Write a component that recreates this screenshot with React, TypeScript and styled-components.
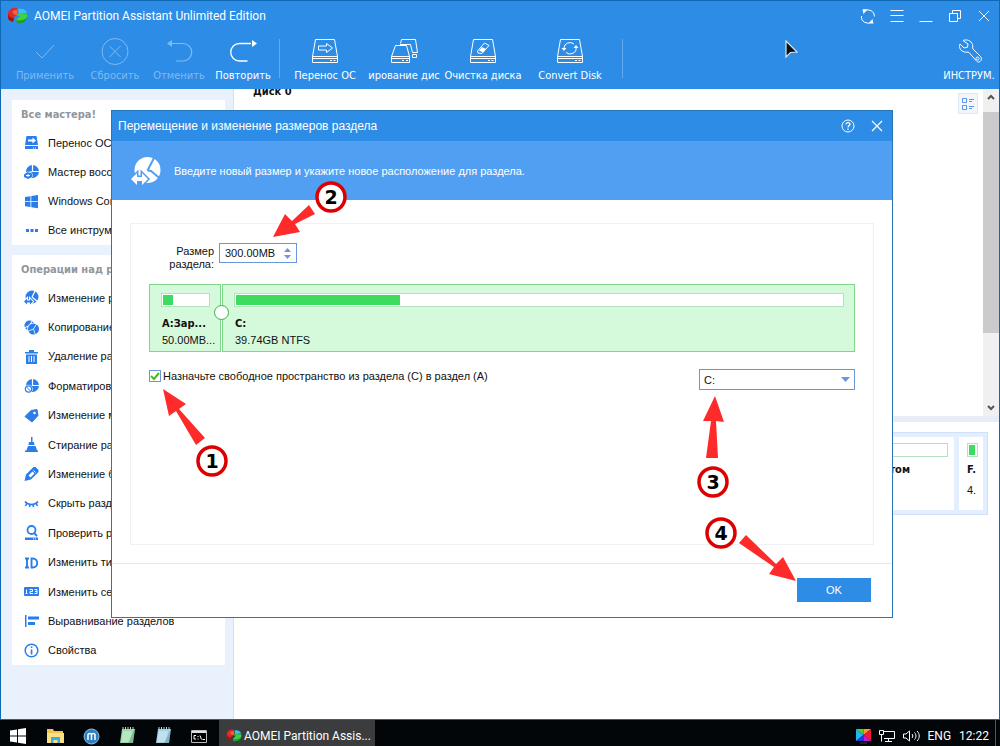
import React, { useState } from "react";
import styled, { createGlobalStyle, css } from "styled-components";

const ui = `"Liberation Sans", Arial, sans-serif`;
const uiWide = `"DejaVu Sans Condensed", "DejaVu Sans", sans-serif`;
const shell = `Roboto, "Noto Sans", sans-serif`;
const blue = "#2d8ce6";
const bannerBlue = "#519ff2";
const iconBlue = "#2b7de9";

const GlobalStyle = createGlobalStyle`
  *, *::before, *::after { box-sizing: border-box; }
  body { margin: 0; background: #fff; font-family: ${ui}; font-size: 11px; color: #111; }
  strong { font-family: ${uiWide}; }
  button, input, select { font: inherit; color: inherit; }
  button { border: 0; padding: 0; background: none; }
  svg { display: block; flex: none; }
`;

const Desktop = styled.div`
  display: flex;
  flex-direction: column;
  min-height: 100vh;
`;

const AppWindow = styled.div`
  position: relative;
  flex: 1;
  display: flex;
  flex-direction: column;
  border: 1px solid #0f68b4;
  background: #fff;
`;

const Header = styled.header`
  background: ${blue};
  color: #fff;
`;

const TitleBar = styled.div`
  display: flex;
  align-items: center;
  height: 32px;
  padding: 0 1px 2px 6px;
  gap: 6px;
`;

const AppTitle = styled.h1`
  flex: 1;
  margin: 0;
  font-family: ${shell};
  font-size: 12px;
  font-weight: 400;
  white-space: nowrap;
`;

const WindowButtons = styled.div`
  display: flex;
`;

const WindowButton = styled.button`
  display: flex;
  align-items: center;
  justify-content: center;
  width: 29px;
  height: 28px;
`;

const Toolbar = styled.div`
  display: flex;
  height: 56px;
  padding-left: 6px;
  font-family: ${uiWide};
`;

const ToolButton = styled.button<{ $width: number }>`
  display: flex;
  flex-direction: column;
  align-items: center;
  gap: 3px;
  width: ${(p) => p.$width}px;
  padding-top: 5px;
  overflow: hidden;
  white-space: nowrap;
  color: #fff;
  line-height: 14px;
  &:disabled { color: #7fbaf3; }
`;

const ToolSeparator = styled.span`
  width: 1px;
  height: 39px;
  margin: 6px 6px 0 4px;
  background: #62aaf0;
`;

const Spacer = styled.span`
  flex: 1;
`;

const Content = styled.div`
  flex: 1;
  display: grid;
  grid-template-columns: 233px 1fr;
`;

const Sidebar = styled.aside`
  display: flex;
  flex-direction: column;
  gap: 10px;
  padding: 11px 8px 0 11px;
  background: #e9f1fd;
  border-right: 1px solid #d3e0f0;
`;

const Group = styled.section`
  background: #fff;
`;

const GroupTitle = styled.h2`
  margin: 0;
  padding-left: 9px;
  height: 28px;
  line-height: 30px;
  font-family: ${uiWide};
  font-size: 11px;
  font-weight: 700;
  color: #8f969e;
  white-space: nowrap;
`;

const GroupList = styled.div<{ $height: number }>`
  display: grid;
  grid-auto-rows: 1fr;
  height: ${(p) => p.$height}px;
`;

const GroupItem = styled.button`
  display: flex;
  align-items: center;
  gap: 9px;
  padding: 0 0 0 12px;
  text-align: left;
  white-space: nowrap;
  overflow: hidden;
`;

const Main = styled.main`
  display: flex;
  flex-direction: column;
  min-width: 0;
`;

const DiskList = styled.div`
  display: flex;
  flex: 0 0 327px;
  overflow: hidden;
`;

const DiskName = styled.h2`
  flex: 1;
  margin: -5px 0 0 19px;
  font-family: ${uiWide};
  font-size: 11px;
  line-height: 16px;
  font-weight: 700;
`;

const ViewButton = styled.button`
  display: flex;
  align-items: center;
  justify-content: center;
  width: 20px;
  height: 21px;
  margin: 4px 5px 0 0;
  border: 1px solid #dbe7f5;
  background: #f1f6fc;
`;

const Scrollbar = styled.div`
  display: flex;
  flex-direction: column;
  align-items: stretch;
  width: 16px;
  background: #f0f0f0;
`;

const ScrollArrow = styled.button`
  display: flex;
  align-items: center;
  justify-content: center;
  height: 16px;
`;

const ScrollThumb = styled.div`
  height: 221px;
  margin: 7px 0 auto;
  background: #cbcbcb;
`;

const Splitter = styled.div`
  height: 6px;
  background: #e6edf6;
`;

const DiskMap = styled.section`
  display: flex;
  gap: 5px;
  height: 83px;
  margin: 10px 11px 0;
  padding: 4px;
  border: 1px solid #cfe0f8;
  background: #e3eefe;
`;

const DiskCell = styled.div<{ $small?: boolean }>`
  display: flex;
  flex-direction: column;
  overflow: hidden;
  background: #fff;
  line-height: 21px;
  ${(p) =>
    p.$small
      ? css`
          width: 24px;
          padding: 6px 5px 0 8px;
        `
      : css`
          flex: 1;
          padding: 6px 6px 0;
        `}
`;

const DiskLabel = styled.strong<{ $end?: boolean }>`
  margin-top: 2px;
  ${(p) => p.$end && "padding-right: 38px; text-align: right;"}
`;

const Usage = styled.div`
  height: 14px;
  padding: 1px;
  border: 1px solid #b5e3bf;
  background: #fff;
  flex: none;
`;

const UsageFill = styled.div`
  height: 100%;
  background: #3bdc60;
`;

/* ---------- dialog ---------- */

const Dialog = styled.div`
  position: absolute;
  top: 109px;
  left: 110px;
  right: 106px;
  border: 1px solid #2676b8;
  background: #fff;
`;

const DialogTitle = styled.div`
  display: flex;
  align-items: center;
  height: 30px;
  padding: 0 1px 1px 6px;
  background: ${blue};
  color: #fff;
`;

const DialogHeading = styled.h2`
  flex: 1;
  margin: 0;
  font-size: 12px;
  font-weight: 400;
`;

const Banner = styled.div`
  display: flex;
  align-items: center;
  gap: 12px;
  height: 59px;
  padding-left: 18px;
  background: ${bannerBlue};
  color: #fff;
`;

const BannerText = styled.p`
  margin: 0;
`;

const Panel = styled.div`
  height: 322px;
  margin: 23px 18px 18px;
  padding: 19px 18px 0;
  border: 1px solid #eff1f6;
`;

const SizeRow = styled.div`
  display: flex;
  gap: 5px;
`;

const SizeLabel = styled.label`
  width: 65px;
  padding-top: 2px;
  line-height: 13px;
  text-align: right;
`;

const SpinBox = styled.div`
  display: flex;
  width: 78px;
  height: 20px;
  border: 1px solid #6a97da;
  background: #fff;
`;

const SizeInput = styled.input`
  flex: 1;
  min-width: 0;
  padding: 0 0 1px 5px;
  border: 0;
  outline: 0;
  background: none;
`;

const Spinners = styled.div`
  display: flex;
  flex-direction: column;
  justify-content: center;
  gap: 3px;
  width: 18px;
`;

const SpinButton = styled.button`
  display: flex;
  justify-content: center;
`;

const PartitionBar = styled.div`
  position: relative;
  display: flex;
  gap: 1px;
  height: 68px;
  margin-top: 13px;
`;

const Partition = styled.div<{ $width?: number }>`
  display: flex;
  flex-direction: column;
  ${(p) => (p.$width ? `width: ${p.$width}px;` : "flex: 1;")}
  min-width: 0;
  padding: 8px 10px 0 11px;
  border: 1px solid #7fd58a;
  background: #d5fadb;
  line-height: 17px;
  white-space: nowrap;
`;

const PartitionName = styled.strong`
  margin-top: 8px;
  padding-left: 1px;
`;

const PartitionSize = styled.span`
  padding-left: 1px;
`;

const DragHandle = styled.button`
  position: absolute;
  left: 65px;
  top: 21px;
  width: 15px;
  height: 15px;
  border: 1px solid #3cae4c;
  border-radius: 50%;
  background: #fff;
`;

const OptionRow = styled.div`
  display: flex;
  justify-content: space-between;
  align-items: flex-start;
  margin-top: 17px;
`;

const CheckLabel = styled.label`
  display: flex;
  align-items: center;
  gap: 2px;
  height: 14px;
`;

const CheckBox = styled.input`
  appearance: none;
  width: 12px;
  height: 12px;
  margin: 0;
  border: 1px solid #6a97da;
  background: #fff;
`;

const CheckHolder = styled.span`
  position: relative;
  display: flex;
`;

const CheckMark = styled.svg`
  position: absolute;
  left: 1px;
  top: 1px;
  pointer-events: none;
`;

const SelectBox = styled.div`
  position: relative;
  width: 156px;
`;

const DriveSelect = styled.select`
  appearance: none;
  display: block;
  width: 100%;
  height: 21px;
  padding: 0 0 0 4px;
  border: 1px solid #6a97da;
  border-radius: 0;
  background: #fff;
`;

const SelectArrow = styled.svg`
  position: absolute;
  right: 5px;
  top: 8px;
  pointer-events: none;
`;

const DialogFooter = styled.footer`
  display: flex;
  justify-content: flex-end;
  padding: 14px 21px 15px;
  border-top: 1px solid #e4e8f0;
`;

const OkButton = styled.button`
  width: 74px;
  height: 24px;
  background: ${blue};
  color: #fff;
`;

const CalloutSvg = styled.svg<{ $left?: number; $right?: number; $top: number }>`
  position: absolute;
  top: ${(p) => p.$top}px;
  ${(p) => (p.$left !== undefined ? `left: ${p.$left}px;` : `right: ${p.$right}px;`)}
  pointer-events: none;
`;

const Pointer = styled.svg`
  position: absolute;
  left: 783px;
  top: 38px;
`;

/* ---------- taskbar ---------- */

const Taskbar = styled.nav`
  display: flex;
  height: 26px;
  overflow: hidden;
  background: #030608;
  color: #fff;
  font-family: ${shell};
  font-size: 12px;
`;

const TaskButton = styled.button`
  display: flex;
  align-items: center;
  justify-content: center;
  width: 36px;
  height: 32px;
  &:first-child { padding-right: 1px; }
  &:nth-child(2) { margin-left: 1px; }
`;

const ActiveTask = styled.button`
  display: flex;
  align-items: center;
  gap: 2px;
  width: 156px;
  height: 32px;
  margin-left: 2px;
  padding-left: 7px;
  background: #3a3c3e;
  white-space: nowrap;
`;

const Tray = styled.div`
  display: flex;
  align-items: center;
  height: 32px;
  margin-left: auto;
  padding-right: 6px;
  gap: 8px;
`;

const ShowDesktop = styled.span`
  width: 5px;
  height: 26px;
  border-left: 1px solid #55585a;
`;

/* ---------- icons ---------- */

const Logo = ({ w = 21 }: { w?: number }) => (
  <svg width={w} height={(w * 18) / 21} viewBox="0 0 21 18">
    <path d="M10 1C5 0 1 3 1 7v4c1 2 3 3 5 4l1-5 4-3z" fill="#e02a22" />
    <path d="M1 7c1 3 3 4 6 4l-1 4c-3-1-5-2-5-5z" fill="#9f1512" />
    <path d="M11 2c5-1 8 1 9 4l-8 1z" fill="#3cc0ee" />
    <path d="M20 7c1 5-2 9-10 9l-1-3 4-4-4-1 2-1z" fill="#3ed344" />
    <path d="M20 10c0 4-4 7-10 6l-1-3c5 1 9 0 11-3z" fill="#1c9d2c" />
    <path d="M5 5c2-2 3-2 5-2l1 4-3 1z" fill="#f4604c" />
  </svg>
);

const Line = ({ children, w, h = w, sw = 1 }: { children: React.ReactNode; w: number; h?: number; sw?: number }) => (
  <svg width={w} height={h} viewBox={`0 0 ${w} ${h}`} fill="none" stroke="currentColor" strokeWidth={sw}>
    {children}
  </svg>
);

const DriveBase = () => (
  <path d="M4.500 1.500h19l3 17v6h-25v-6zM1.500 18.500h25M1.500 20.500h25M19 22.500h2M22.500 22.500h2" />
);

const toolIcons: Record<string, React.ReactNode> = {
  apply: <Line w={28}><path d="M5 14l6 6L23 7" /></Line>,
  discard: <Line w={28}><circle cx="14" cy="13.500" r="13" /><path d="M8.500 8l11 11M19.500 8l-11 11" /></Line>,
  undo: <Line w={28}><path d="M6 5.500h12a8.500 8.500 0 0 1 0 17.500h-7" strokeWidth="1.200" /><path d="M2 5.500l5-3.500v7z" fill="currentColor" stroke="none" /></Line>,
  redo: <Line w={28}><path d="M22 5.500H10.500a8.500 8.500 0 0 0 0 17.500h8" strokeWidth="1.300" /><path d="M28 5.500l-5-3.500v7z" fill="currentColor" stroke="none" /></Line>,
  migrate: <Line w={28}><DriveBase /><path d="M7.500 8h8V5.500l6 4.500-6 4.500V12h-8z" /></Line>,
  clone: <Line w={28}><path d="M5.500 7.500h11l3 11v6h-18v-6zM1.500 18.500h18M1.500 20.500h18M12 22.500h2M16 22.500h2M10.500 5.500l1-4h14l2 13h-5l-2-8H10M22.500 16.500h4v3h-4z" /></Line>,
  wipe: <Line w={28}><DriveBase /><path d="M8.500 13l7-8 4.500 2.500-7 8-4-.5z" /><path d="M10 12.500l3-3.500 4 2-3 3.500z" fill="currentColor" stroke="none" /></Line>,
  convert: <Line w={28}><DriveBase /><path d="M8 10a6 5.500 0 0 1 10-4M20 9.500a6 5.500 0 0 1-10 5" /><path d="M5.500 10h5L8 13zM17.500 10h5L20 7z" fill="currentColor" stroke="none" /></Line>,
  tools: (
    <Line w={28}>
      <path d="M8 2.500c4-1.500 8 0 9.500 4 .5 2-.2 3.300.5 4.500l7.500 7.500c2 2 .5 5.500-2 5.500-1.500 0-2-1-2.500-1.500L14 14.500c-1.200-.8-2.500 0-4.500-.5C5.500 13 3.500 9.500 5 6l4 4 3.500-.8.5-3.200z" />
      <circle cx="22.500" cy="20.500" r="1.500" />
    </Line>
  ),
};

const sideIcons: Record<string, React.ReactNode> = {
  drive: <><path d="M2.500 1h10L14 10H1z" /><path d="M1 11h13v3H1z" /><path d="M4 4.500h4.500v-2L12 5.500 8.500 8.500v-2H4z" fill="#fff" /><path d="M9 13h1M11 13h1" stroke="#fff" /></>,
  recover: <><circle cx="8.500" cy="7.500" r="6.500" /><path d="M8.500 1v6.500H15M8.500 7.500L2 9" stroke="#fff" strokeWidth="1.200" fill="none" /><path d="M0 10.500L3.500 8 8 9.500V13l-4 2-4-2z" stroke="#fff" paintOrder="stroke" /><path d="M2 11.500h4M4 10v3" stroke="#fff" /></>,
  windows: <path d="M1 3l5.500-.8v5H1zM7.300 2L14 1v6.200H7.300zM1 8h5.500v5L1 12.200zM7.300 8H14v6.200L7.300 13.200z" />,
  dots: <path d="M2 6h3v3H2zM6.500 6h3v3h-3zM11 6h3v3h-3z" />,
  resize: <><circle cx="8" cy="7" r="6.500" /><path d="M8 7l3-6M8 7l6 5" stroke="#fff" strokeWidth="1.200" /><path d="M0 11.500L3 8.500v2h3v-2l3 3-3 3v-2H3v2z" stroke="#fff" strokeWidth="2" paintOrder="stroke" /></>,
  copy: <><circle cx="5.500" cy="5.500" r="5" /><path d="M5.500 5.500L8 1M5.500 5.500L0 8" stroke="#fff" /><circle cx="9.500" cy="9" r="5.500" stroke="#fff" strokeWidth="1.500" paintOrder="stroke" /><path d="M9.500 9l3-5M9.500 9l-5 2M9.500 9l2 6" stroke="#fff" strokeWidth=".8" /></>,
  trash: <><path d="M1 3h13v1.500H1zM5 1h5v2H5zM2 5.500h11V15H2z" /><path d="M5 7v6M7.500 7v6M10 7v6" stroke="#fff" /></>,
  format: <><circle cx="8.500" cy="7.500" r="6.500" /><path d="M8.500 1v6.500H15" stroke="#fff" strokeWidth="1.200" fill="none" /><circle cx="4.500" cy="11" r="4.300" fill="#fff" /><circle cx="4.500" cy="11" r="3.200" fill="#fff" stroke={iconBlue} strokeWidth="1.200" /><path d="M2.500 9l4 4" stroke={iconBlue} /></>,
  tag: <><path d="M7 2.500L13 1.500l1 6L8 14 1 8.500z" strokeLinejoin="round" stroke={iconBlue} /><circle cx="10.500" cy="5" r="1.300" fill="#fff" /></>,
  broom: <path d="M7 0h1.500v5H10l.5 3h-6L5 5h2zM4 9h7.500l2 5.500H2zM1 13.500h13V15H1z" />,
  pencil: <><path d="M.5 15L2 8.500 9.500 1h2L14.500 4v2L7 13.500z" /><path d="M4.500 9.500l4-4 2 2-4 4z" fill="#fff" /><path d="M9.500 4.500l2 2" stroke="#fff" /></>,
  eye: <path d="M1 5.500c3 4 10 4 13 0M3 7l-1.500 3M6 8.500L5.500 11M9 8.500l.5 2.500M12 7l1.500 3" fill="none" stroke={iconBlue} strokeWidth="1.600" />,
  check: <><circle cx="7.500" cy="5" r="4" fill="none" stroke={iconBlue} strokeWidth="1.800" /><path d="M10 8l3 3" stroke={iconBlue} strokeWidth="1.800" /><path d="M1 12.500h13V15H1z" /><path d="M9 13.800h1M11 13.800h1" stroke="#fff" /></>,
  id: <path d="M1 3.500h4M1 12.500h4M3 3.500v9M7.500 3.500v9h1.200c6 0 6-9 0-9z" fill="none" stroke={iconBlue} strokeWidth="1.900" />,
  serial: <><rect x="0" y="3" width="15" height="9" rx="1" /><path d="M2.500 5.500v4M1.500 9.500h2M5.500 5.500h3v2h-2.500v2h3M10.500 5.500h2.500v4h-2.500M11 7.500h2" fill="none" stroke="#fff" /></>,
  align: <path d="M1 2h1.500v12H1zM4 3.500h11v3H4zM4 9h7v3H4z" />,
  info: <><circle cx="7.500" cy="7.500" r="6.300" fill="none" stroke={iconBlue} strokeWidth="1.500" /><path d="M6.700 6.500h1.700v5H6.700zM6.700 3.500h1.700V5H6.700z" /></>,
};

const wizards: [string, string][] = [
  ["drive", "Перенос ОС на SSD"],
  ["recover", "Мастер восстановления"],
  ["windows", "Windows Command"],
  ["dots", "Все инструменты"],
];

const operations: [string, string][] = [
  ["resize", "Изменение размера"],
  ["copy", "Копирование раздела"],
  ["trash", "Удаление раздела"],
  ["format", "Форматирование"],
  ["tag", "Изменение метки"],
  ["broom", "Стирание раздела"],
  ["pencil", "Изменение буквы"],
  ["eye", "Скрыть раздел"],
  ["check", "Проверить раздел"],
  ["id", "Изменить тип"],
  ["serial", "Изменить серийный"],
  ["align", "Выравнивание разделов"],
  ["info", "Свойства"],
];

const SideGroup = ({ title, items, height }: { title: string; items: [string, string][]; height: number }) => (
  <Group>
    <GroupTitle>{title}</GroupTitle>
    <GroupList $height={height}>
      {items.map(([icon, label]) => (
        <GroupItem key={label}>
          <svg width="15" height="15" viewBox="0 0 15 15" fill={iconBlue}>{sideIcons[icon]}</svg>
          {label}
        </GroupItem>
      ))}
    </GroupList>
  </Group>
);

const Tool = ({ icon, label, width, disabled }: { icon: string; label: string; width: number; disabled?: boolean }) => (
  <ToolButton $width={width} disabled={disabled}>
    {toolIcons[icon]}
    {label}
  </ToolButton>
);

type CalloutProps = {
  n: number;
  box: [number, number, number, number];
  centre: [number, number];
  arrow: string;
  left?: number;
  right?: number;
};

const Callout = ({ n, box, centre, arrow, left, right }: CalloutProps) => (
  <CalloutSvg $top={box[1]} $left={left} $right={right} width={box[2]} height={box[3]} viewBox={box.join(" ")}>
    <polygon points={arrow} fill="#ff2a2a" />
    <circle cx={centre[0]} cy={centre[1]} r="14" fill="#fff" stroke="#dd0000" strokeWidth="3.500" />
    <text
      x={centre[0]}
      y={centre[1] + 7}
      textAnchor="middle"
      fontFamily='"DejaVu Sans", sans-serif'
      fontWeight="700"
      fontSize="19"
      fill="#000"
    >
      {n}
    </text>
  </CalloutSvg>
);

const Notepad = ({ tone }: { tone: string }) => (
  <svg width="17" height="18" viewBox="0 0 17 18">
    <path d="M3 2h13l-2 14H1z" fill={tone} />
    <path d="M4 4h9l-2 11H2z" fill="#fff" opacity=".35" />
    <path d="M16 2l-2 14H9z" fill="#3b6f74" opacity=".3" />
    <path d="M4 0v3M6.500 0v3M9 0v3M11.500 0v3M14 0v3" stroke="#c9d2d4" />
  </svg>
);

export default function App() {
  const [size, setSize] = useState("300.00MB");
  const [assign, setAssign] = useState(true);

  return (
    <Desktop>
      <GlobalStyle />
      <AppWindow>
        <Header>
          <TitleBar>
            <Logo />
            <AppTitle>AOMEI Partition Assistant Unlimited Edition</AppTitle>
            <WindowButtons>
              <WindowButton aria-label="Обновить">
                <Line w={16}>
                  <path d="M4 3.500A6.300 6.300 0 0 1 14.500 8.500M1.500 8A6.300 6.300 0 0 0 12 13.500" />
                  <path d="M2.500 1.200h5L3.500 6zM13.500 15.500h-5l4-4.500z" fill="currentColor" stroke="none" />
                </Line>
              </WindowButton>
              <WindowButton aria-label="Меню"><Line w={14}><path d="M.5 1.500h13M.5 6.500h13M.5 12.500h13" /></Line></WindowButton>
              <WindowButton aria-label="Свернуть"><Line w={14}><path d="M.5 12.500h13" /></Line></WindowButton>
              <WindowButton aria-label="Восстановить"><Line w={14}><path d="M1.500 4.500h8v8h-8zM4.500 4V1.500h8v8H10" /></Line></WindowButton>
              <WindowButton aria-label="Закрыть"><Line w={14}><path d="M2 2l10 10M12 2L2 12" /></Line></WindowButton>
            </WindowButtons>
          </TitleBar>
          <Toolbar>
            <Tool icon="apply" label="Применить" width={76} disabled />
            <Tool icon="discard" label="Сбросить" width={64} disabled />
            <Tool icon="undo" label="Отменить" width={64} disabled />
            <Tool icon="redo" label="Повторить" width={64} />
            <ToolSeparator />
            <Tool icon="migrate" label="Перенос ОС" width={78} />
            <Tool icon="clone" label="ирование дис" width={80} />
            <Tool icon="wipe" label="Очистка диска" width={78} />
            <Tool icon="convert" label="Convert Disk" width={96} />
            <ToolSeparator />
            <Spacer />
            <Tool icon="tools" label="ИНСТРУМ." width={60} />
          </Toolbar>
        </Header>

        <Content>
          <Sidebar>
            <SideGroup title="Все мастера!" items={wizards} height={117} />
            <SideGroup title="Операции над разделами" items={operations} height={382} />
          </Sidebar>
          <Main>
            <DiskList>
              <DiskName>Диск 0</DiskName>
              <ViewButton aria-label="Вид">
                <svg width="14" height="14" viewBox="0 0 14 14" fill="none" stroke="#5b94ec">
                  <path d="M1.500 1.500h4v4h-4zM1.500 8.500h4v4h-4zM8 2.500h5M8 4.500h3M8 9.500h5M8 11.500h3" />
                </svg>
              </ViewButton>
              <Scrollbar>
                <ScrollArrow aria-label="Вверх"><Line w={8} sw={2}><path d="M1 6l3-3 3 3" stroke="#555" /></Line></ScrollArrow>
                <ScrollThumb />
                <ScrollArrow aria-label="Вниз"><Line w={8} sw={2}><path d="M1 2l3 3 3-3" stroke="#555" /></Line></ScrollArrow>
              </Scrollbar>
            </DiskList>
            <Splitter />
            <DiskMap>
              <DiskCell>
                <Usage />
                <DiskLabel $end>том</DiskLabel>
              </DiskCell>
              <DiskCell $small>
                <Usage><UsageFill style={{ width: "80%" }} /></Usage>
                <DiskLabel>F.</DiskLabel>
                <span>4.</span>
              </DiskCell>
            </DiskMap>
          </Main>
        </Content>

        <Dialog role="dialog" aria-labelledby="dialog-title">
          <DialogTitle>
            <DialogHeading id="dialog-title">Перемещение и изменение размеров раздела</DialogHeading>
            <WindowButton aria-label="Справка">
              <Line w={14}><circle cx="7" cy="7" r="6" /><path d="M5 5.500C5 3 9 3 9 5.300 9 6.700 7 6.500 7 8.500M7 9.500V11" strokeWidth="1.200" /></Line>
            </WindowButton>
            <WindowButton aria-label="Закрыть"><Line w={14}><path d="M2 2l10 10M12 2L2 12" strokeWidth="1.200" /></Line></WindowButton>
          </DialogTitle>
          <Banner>
            <svg width="32" height="30" viewBox="0 0 32 30">
              <circle cx="17.500" cy="14" r="13" fill="#fff" />
              <path d="M17.500 14.500L24.500 1M17.500 14.500L21 15l9 7.500" fill="none" stroke={bannerBlue} strokeWidth="2" />
              <path d="M1 23l6-6v4h5v-4l6 6-6 6v-4H7v4z" fill="#fff" stroke={bannerBlue} strokeWidth="3" paintOrder="stroke" />
            </svg>
            <BannerText>Введите новый размер и укажите новое расположение для раздела.</BannerText>
          </Banner>
          <Panel>
            <SizeRow>
              <SizeLabel htmlFor="size">Размер раздела:</SizeLabel>
              <SpinBox>
                <SizeInput id="size" value={size} onChange={(e) => setSize(e.target.value)} />
                <Spinners>
                  <SpinButton aria-label="Больше"><svg width="7" height="4"><path d="M0 4h7L3.500 0z" fill="#6d97d8" /></svg></SpinButton>
                  <SpinButton aria-label="Меньше"><svg width="7" height="4"><path d="M0 0h7L3.500 4z" fill="#6d97d8" /></svg></SpinButton>
                </Spinners>
              </SpinBox>
            </SizeRow>
            <PartitionBar>
              <Partition $width={72}>
                <Usage><UsageFill style={{ width: "22%" }} /></Usage>
                <PartitionName>A:Зар...</PartitionName>
                <PartitionSize>50.00MB...</PartitionSize>
              </Partition>
              <Partition>
                <Usage><UsageFill style={{ width: "27%" }} /></Usage>
                <PartitionName>C:</PartitionName>
                <PartitionSize>39.74GB NTFS</PartitionSize>
              </Partition>
              <DragHandle aria-label="Граница разделов" />
            </PartitionBar>
            <OptionRow>
              <CheckLabel>
                <CheckHolder>
                  <CheckBox type="checkbox" checked={assign} onChange={(e) => setAssign(e.target.checked)} />
                  {assign && (
                    <CheckMark width="10" height="10" viewBox="0 0 10 10">
                      <path d="M1 5l3 3 5-6" fill="none" stroke="#4fb81c" strokeWidth="2" />
                    </CheckMark>
                  )}
                </CheckHolder>
                Назначьте свободное пространство из раздела (C) в раздел (A)
              </CheckLabel>
              <SelectBox>
                <DriveSelect aria-label="Раздел" defaultValue="C:">
                  <option>C:</option>
                </DriveSelect>
                <SelectArrow width="9" height="5"><path d="M0 0h9L4.500 5z" fill="#6d97d8" /></SelectArrow>
              </SelectBox>
            </OptionRow>
          </Panel>
          <DialogFooter>
            <OkButton>OK</OkButton>
          </DialogFooter>

          <Callout n={1} left={48} box={[48, 276, 72, 94]} centre={[100, 350]}
            arrow="51,278 74,293 67,298 93,327 84,334 64,300 57,305" />
          <Callout n={2} left={158} box={[158, 68, 80, 60]} centre={[219, 86]}
            arrow="161,126 173,103 180,110 197,94 203,103 183,113 188,121" />
          <Callout n={3} right={159} box={[581, 282, 40, 106]} centre={[601, 371]}
            arrow="603,285 612,311 604,310 606,347 594,347 599,310 591,310" />
          <Callout n={4} right={93} box={[589, 402, 98, 72]} centre={[609, 422]}
            arrow="684,470 657,463 662,456 627,432 634,424 664,453 671,446" />
        </Dialog>

        <Pointer width="16" height="20" viewBox="0 0 16 20">
          <path d="M2 2v16l4.500-4.500L13 13z" fill="#111" stroke="#d8e6f5" strokeWidth="1.200" />
        </Pointer>
      </AppWindow>

      <Taskbar>
        <TaskButton aria-label="Пуск">
          <svg width="16" height="16" viewBox="0 0 16 16" fill="#fff"><path d="M0 2.500L7 1.500v6H0zM8 1.300L16 0v7.500H8zM0 8.500h7v6L0 13.500zM8 8.500h8V16l-8-1.300z" /></svg>
        </TaskButton>
        <TaskButton aria-label="Проводник">
          <svg width="17" height="16" viewBox="0 0 17 16"><path d="M0 1h6l1 2h9v12H0z" fill="#f1c451" /><path d="M0 5h17v10H0z" fill="#fbdf83" /><path d="M4 15V9h9v6h-2.500v-3h-4v3z" fill="#39b0e5" /></svg>
        </TaskButton>
        <TaskButton aria-label="Maxthon">
          <svg width="17" height="17" viewBox="0 0 17 17"><circle cx="8.500" cy="8.500" r="7.500" fill="#2e7fc0" stroke="#8dbfe6" /><path d="M5 12V6.500c0-1.500 3.500-1.500 3.500 0V12M8.500 6.500c0-1.500 3.500-1.500 3.500 0V12" fill="none" stroke="#fff" strokeWidth="1.500" /></svg>
        </TaskButton>
        <TaskButton aria-label="Блокнот"><Notepad tone="#93d7a1" /></TaskButton>
        <TaskButton aria-label="Заметки"><Notepad tone="#9ed0e4" /></TaskButton>
        <TaskButton aria-label="Командная строка">
          <svg width="16" height="13" viewBox="0 0 16 13"><path d="M.5.5h15v12H.5z" fill="#000" stroke="#b9bcbe" /><path d="M1 2h14" stroke="#dfe1e2" strokeWidth="2" /><path d="M5 5.500H3v3.500h2M7 6v1M7 8.500v1M9 5.500l1.500 4M11.500 9.500H14" fill="none" stroke="#fff" /></svg>
        </TaskButton>
        <ActiveTask><Logo w={16} />AOMEI Partition Assis...</ActiveTask>
        <Tray>
          <svg width="15" height="15" viewBox="0 0 15 15">
            <path d="M0 0h7.500v6z" fill="#4ad12f" /><path d="M7.500 0H15L7.500 6z" fill="#ff9a1c" />
            <path d="M0 0v12l7.500-6z" fill="#1fb6f2" /><path d="M15 0v12L7.500 6z" fill="#ee1b3c" />
            <path d="M0 12h7.500V6z" fill="#2237e0" /><path d="M15 12H7.500V6z" fill="#c01bd8" />
            <path d="M4 14h7" stroke="#222" strokeWidth="2" />
          </svg>
          <Line w={16} h={14}><path d="M4 2.500h11.500v7H5M9.500 9.500v3M6 12.500h7M.5 1.500h4v4h-4zM2.500 5.500v7" /></Line>
          <Line w={17} h={14}><path d="M.5 5v4h2.500l3.500 3V2L3 5zM9 5c1 1 1 3 0 4M11.500 3.500c2 2 2 5 0 7M14 2c3 3 3 7 0 10" /></Line>
          <span>ENG</span>
          <time>12:22</time>
        </Tray>
        <ShowDesktop />
      </Taskbar>
    </Desktop>
  );
}
